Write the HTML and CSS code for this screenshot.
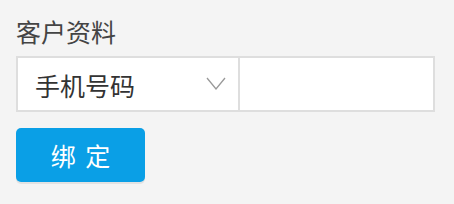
FILE: index.html
```html
<!DOCTYPE html>
<html lang="zh-CN">

<head>
    <meta charset="UTF-8">
    <meta name="viewport" content="width=device-width, initial-scale=1.0">
    <title>客户资料</title>
    <link rel="stylesheet" href="styles.css">
</head>

<body>
    <div class="panel">
        <h3 class="panel-title">客户资料</h3>
        <div class="bind-row">
            <div class="bind-select">
                <span>手机号码</span>
                <svg class="chevron" width="20" height="13" viewBox="0 0 20 13">
                    <polyline points="1,1 10,12 19,1" fill="none" stroke="#999" stroke-width="1.3" />
                </svg>
            </div>
            <input class="bind-input" type="text">
        </div>
        <button class="bind-btn">绑 定</button>
    </div>
</body>

</html>
```

FILE: styles.css
```css
body {
    margin: 0;
    background-color: #f4f4f4;
    font-family: "Noto Sans CJK SC", "Noto Sans", sans-serif;
    color: #333;
}

.panel {
    padding: 16px;
}

.panel-title {
    margin: 0 0 10px 0;
    font-size: 25px;
    font-weight: normal;
    line-height: 30px;
    color: #444;
}

.bind-row {
    display: flex;
    width: 419px;
    height: 56px;
    box-sizing: border-box;
    border: 2px solid #dedede;
    background-color: #fff;
}

.bind-select {
    flex: 0 0 222px;
    display: flex;
    align-items: center;
    justify-content: space-between;
    padding: 2px 12px 0 17px;
    box-sizing: border-box;
    border-right: 2px solid #dedede;
    font-size: 25px;
    color: #333;
}

.chevron {
    display: block;
    margin-top: -3px;
}

.bind-input {
    flex: 1;
    min-width: 0;
    border: none;
    outline: none;
    background: transparent;
    font-size: 20px;
}

.bind-btn {
    display: block;
    margin-top: 16px;
    width: 129px;
    height: 54px;
    border: none;
    border-radius: 5px;
    background-color: #0a9fe6;
    color: #fff;
    font-family: inherit;
    font-size: 25px;
    letter-spacing: 2px;
    text-indent: 2px;
    box-shadow: 0 2px 0 #e2e2e2;
    cursor: pointer;
}
```
